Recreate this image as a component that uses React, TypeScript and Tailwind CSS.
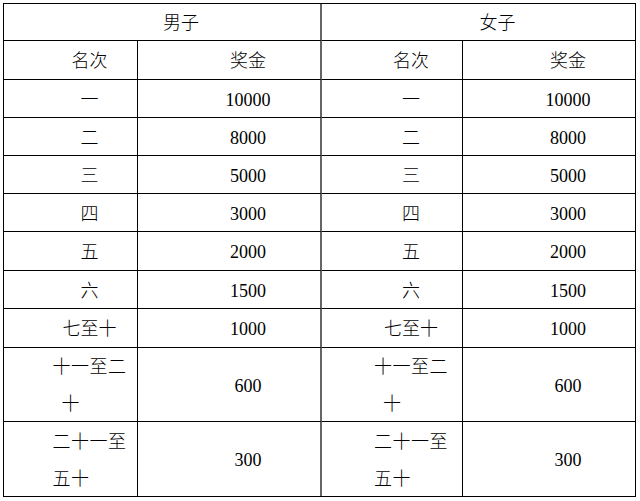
import React from 'react';

type Row = { rank: React.ReactNode; prize: string; h: string };

const TwoLine = ({ first, second, indent }: { first: string; second: string; indent: boolean }) => (
  <div className="w-[74px] text-left leading-[37px] tracking-[0.5px]">
    <div>{first}</div>
    <div className={indent ? 'pl-[9px]' : ''}>{second}</div>
  </div>
);

const rows: Row[] = [
  { rank: '一', prize: '10000', h: 'h-[38px]' },
  { rank: '二', prize: '8000', h: 'h-[38px]' },
  { rank: '三', prize: '5000', h: 'h-[38px]' },
  { rank: '四', prize: '3000', h: 'h-[38px]' },
  { rank: '五', prize: '2000', h: 'h-[39px]' },
  { rank: '六', prize: '1500', h: 'h-[38px]' },
  { rank: '七至十', prize: '1000', h: 'h-[39px]' },
  { rank: <TwoLine first="十一至二" second="十" indent />, prize: '600', h: 'h-[74px]' },
  { rank: <TwoLine first="二十一至" second="五十" indent={false} />, prize: '300', h: 'h-[74px]' },
];

const cell = 'flex items-center justify-center pl-[38px] pt-[3px] text-center';

const App: React.FC = () => {
  return (
    <div className="w-[640px] h-[501px] bg-white pt-[3px] pl-[3px] text-black text-[18px] font-light font-['Liberation_Serif','Noto_Sans_CJK_SC',serif]">
      <div className="w-[633px] border border-black grid grid-cols-[134px_184px_141px_172px]">
        {/* header */}
        <div className={`${cell} col-span-2 h-[37px] border-b border-black border-r-2 border-r-[#666]`}>男子</div>
        <div className={`${cell} col-span-2 h-[37px] border-b border-black`}>女子</div>

        <div className={`${cell} h-[39px] border-b border-r border-black`}>名次</div>
        <div className={`${cell} h-[39px] border-b border-black border-r-2 border-r-[#666]`}>奖金</div>
        <div className={`${cell} h-[39px] border-b border-r border-black`}>名次</div>
        <div className={`${cell} h-[39px] border-b border-black`}>奖金</div>

        {rows.map((r, i) => {
          const last = i === rows.length - 1;
          const b = last ? '' : 'border-b border-black';
          return (
            <React.Fragment key={i}>
              <div className={`${cell} ${r.h} ${b} border-r border-r-black`}>{r.rank}</div>
              <div className={`${cell} ${r.h} ${b} border-r-2 border-r-[#666]`}>{r.prize}</div>
              <div className={`${cell} ${r.h} ${b} border-r border-r-black`}>{r.rank}</div>
              <div className={`${cell} ${r.h} ${b}`}>{r.prize}</div>
            </React.Fragment>
          );
        })}
      </div>
    </div>
  );
};

export default App;
